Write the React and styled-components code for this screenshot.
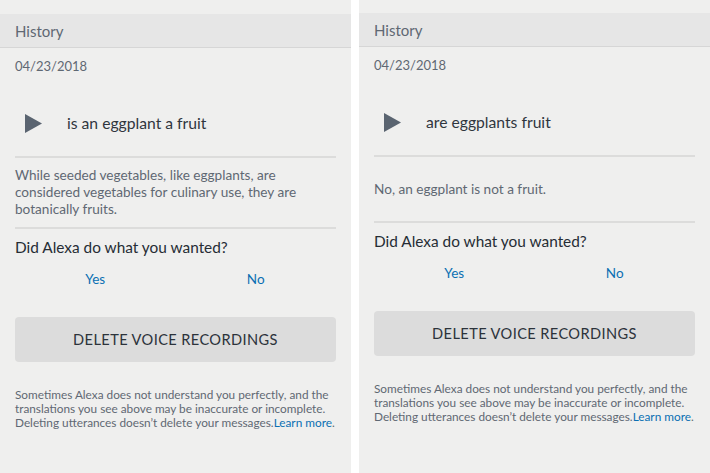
import React from "react";
import styled, { createGlobalStyle } from "styled-components";

const Global = createGlobalStyle`
  html, body { margin: 0; padding: 0; background: #ffffff; }
  body { font-family: Lato, "Noto Sans", Arial, sans-serif; -webkit-font-smoothing: antialiased; }
`;

const Page = styled.div`
  display: flex;
  gap: 8px;
  width: 710px;
  height: 473px;
  overflow: hidden;
`;

const Panel = styled.section`
  flex: 0 0 351px;
  width: 351px;
  min-width: 0;
  overflow: hidden;
  background: #efefee;
  padding-top: ${(p) => p.$top}px;
  box-sizing: border-box;
`;

const Header = styled.div`
  height: 33px;
  background: #e6e6e6;
  border-bottom: 1px solid #d6d6d6;
  display: flex;
  align-items: center;
  padding-left: 15px;
  font-size: 15px;
  color: #5f6873;
`;

const Body = styled.div`
  padding: 0 15px;
`;

const DateLine = styled.div`
  margin-top: 9px;
  height: 18px;
  line-height: 18px;
  font-size: 13px;
  color: #5f6873;
`;

const Utterance = styled.div`
  margin-top: 23px;
  height: 50px;
  display: flex;
  align-items: center;
  gap: 25px;
  padding-left: 10px;
  font-size: 15.7px;
  color: #2f363e;
`;

const Divider = styled.div`
  height: 2px;
  background: #dcdcdb;
  margin-top: ${(p) => p.$mt || 0}px;
`;

const Answer = styled.div`
  min-height: 64px;
  box-sizing: border-box;
  padding: 9px 0;
  display: flex;
  align-items: center;
  font-size: 13.6px;
  line-height: 17px;
  color: #5f6873;
`;

const Question = styled.div`
  margin-top: 8px;
  font-size: 15.4px;
  line-height: 20px;
  color: #262d35;
`;

const Choices = styled.div`
  margin-top: 13px;
  display: grid;
  grid-template-columns: 1fr 1fr;
`;

const Choice = styled.a`
  text-align: center;
  font-size: 13.5px;
  line-height: 18px;
  color: #0a6fb3;
  cursor: pointer;
`;

const DeleteButton = styled.button`
  margin-top: 29px;
  width: 100%;
  height: 45px;
  border: none;
  border-radius: 4px;
  background: #dcdcdc;
  font-family: inherit;
  font-size: 14.6px;
  letter-spacing: 0.4px;
  color: #2c333b;
  cursor: pointer;
`;

const Footer = styled.p`
  margin: 26px 0 0;
  font-size: 11.8px;
  line-height: 14px;
  white-space: nowrap;
  color: #5f6873;
`;

const Link = styled.a`
  color: #0a6fb3;
`;

const PlayIcon = () => (
  <svg width="17" height="19" viewBox="0 0 17 19">
    <polygon points="0,0 17,9.5 0,19" fill="#5a6470" />
  </svg>
);

const HistoryPanel = ({ top, query, answer }) => (
  <Panel $top={top}>
    <Header>History</Header>
    <Body>
      <DateLine>04/23/2018</DateLine>
      <Utterance>
        <PlayIcon />
        <span>{query}</span>
      </Utterance>
      <Divider $mt={8} />
      <Answer>{answer}</Answer>
      <Divider />
      <Question>Did Alexa do what you wanted?</Question>
      <Choices>
        <Choice>Yes</Choice>
        <Choice>No</Choice>
      </Choices>
      <DeleteButton>DELETE VOICE RECORDINGS</DeleteButton>
      <Footer>
        Sometimes Alexa does not understand you perfectly, and the
        <br />
        translations you see above may be inaccurate or incomplete.
        <br />
        Deleting utterances doesn’t delete your messages.<Link>Learn more</Link>.
      </Footer>
    </Body>
  </Panel>
);

export default function App() {
  return (
    <>
      <Global />
      <Page>
        <HistoryPanel
          top={14}
          query="is an eggplant a fruit"
          answer="While seeded vegetables, like eggplants, are considered vegetables for culinary use, they are botanically fruits."
        />
        <HistoryPanel
          top={13}
          query="are eggplants fruit"
          answer="No, an eggplant is not a fruit."
        />
      </Page>
    </>
  );
}
